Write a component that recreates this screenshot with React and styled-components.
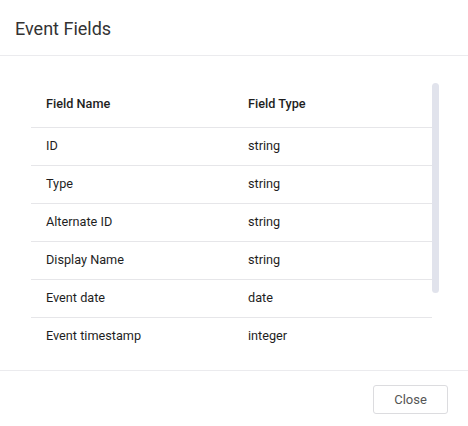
import styled, { createGlobalStyle } from 'styled-components';

const GlobalStyle = createGlobalStyle`
    html, body {
        margin: 0;
        padding: 0;
        background: #fff;
    }
    body {
        font-family: Roboto, 'Liberation Sans', sans-serif;
        color: #222;
    }
`;

const Dialog = styled.div`
    width: 468px;
    height: 426px;
    display: flex;
    flex-direction: column;
    background: #fff;
`;
const Header = styled.div`
    height: 56px;
    display: flex;
    align-items: center;
    padding: 0 15px;
    border-bottom: 1px solid #ebebee;
    box-sizing: border-box;
    flex-shrink: 0;
`;
const Title = styled.h2`
    margin: 0;
    font-size: 18px;
    font-weight: 400;
    color: #333;
    position: relative;
    top: 1px;
`;
const Body = styled.div`
    flex: 1;
    padding: 27px 29px 16px 31px;
    border-bottom: 1px solid #ebebee;
`;
const Scroller = styled.div`
    position: relative;
    height: 270px;
    overflow: hidden;
    padding-right: 7px;
`;
const Thumb = styled.div`
    position: absolute;
    top: 0;
    right: 0;
    width: 7px;
    height: 210px;
    border-radius: 4px;
    background: #e1e3ec;
`;
const Table = styled.table`
    width: 401px;
    table-layout: fixed;
    border-collapse: collapse;
    font-size: 12.7px;
`;
const HeadCell = styled.th`
    text-align: left;
    font-weight: 500;
    color: #1e1e1e;
    height: 44px;
    padding: 0 0 2px 15px;
    border-bottom: 1px solid #e6e6e9;
    width: ${(props) => props.$width || 'auto'};
    box-sizing: border-box;
`;
const Row = styled.tr`
    border-bottom: 1px solid #e6e6e9;

    &:last-child {
        border-bottom: none;
    }
`;
const Cell = styled.td`
    height: 36px;
    padding: 0 0 1px 15px;
    color: #1e1e1e;
`;
const Footer = styled.div`
    height: 55px;
    display: flex;
    justify-content: flex-end;
    align-items: flex-start;
    padding: 14px 20px 0 0;
    box-sizing: border-box;
    flex-shrink: 0;
`;
const Button = styled.button`
    width: 75px;
    height: 29px;
    background: #fff;
    border: 1px solid #dcdcdf;
    border-radius: 3px;
    font-family: Roboto, 'Liberation Sans', sans-serif;
    font-size: 13px;
    color: #555;
    cursor: pointer;
`;

const fields = [
    ['ID', 'string'],
    ['Type', 'string'],
    ['Alternate ID', 'string'],
    ['Display Name', 'string'],
    ['Event date', 'date'],
    ['Event timestamp', 'integer'],
];

function App() {
    return (
        <>
            <GlobalStyle />
            <Dialog>
                <Header>
                    <Title>Event Fields</Title>
                </Header>
                <Body>
                    <Scroller>
                        <Table>
                            <thead>
                                <tr>
                                    <HeadCell $width="202px">Field Name</HeadCell>
                                    <HeadCell>Field Type</HeadCell>
                                </tr>
                            </thead>
                            <tbody>
                                {fields.map(([name, type]) => (
                                    <Row key={name}>
                                        <Cell>{name}</Cell>
                                        <Cell>{type}</Cell>
                                    </Row>
                                ))}
                            </tbody>
                        </Table>
                        <Thumb />
                    </Scroller>
                </Body>
                <Footer>
                    <Button>Close</Button>
                </Footer>
            </Dialog>
        </>
    );
}

export default App;
